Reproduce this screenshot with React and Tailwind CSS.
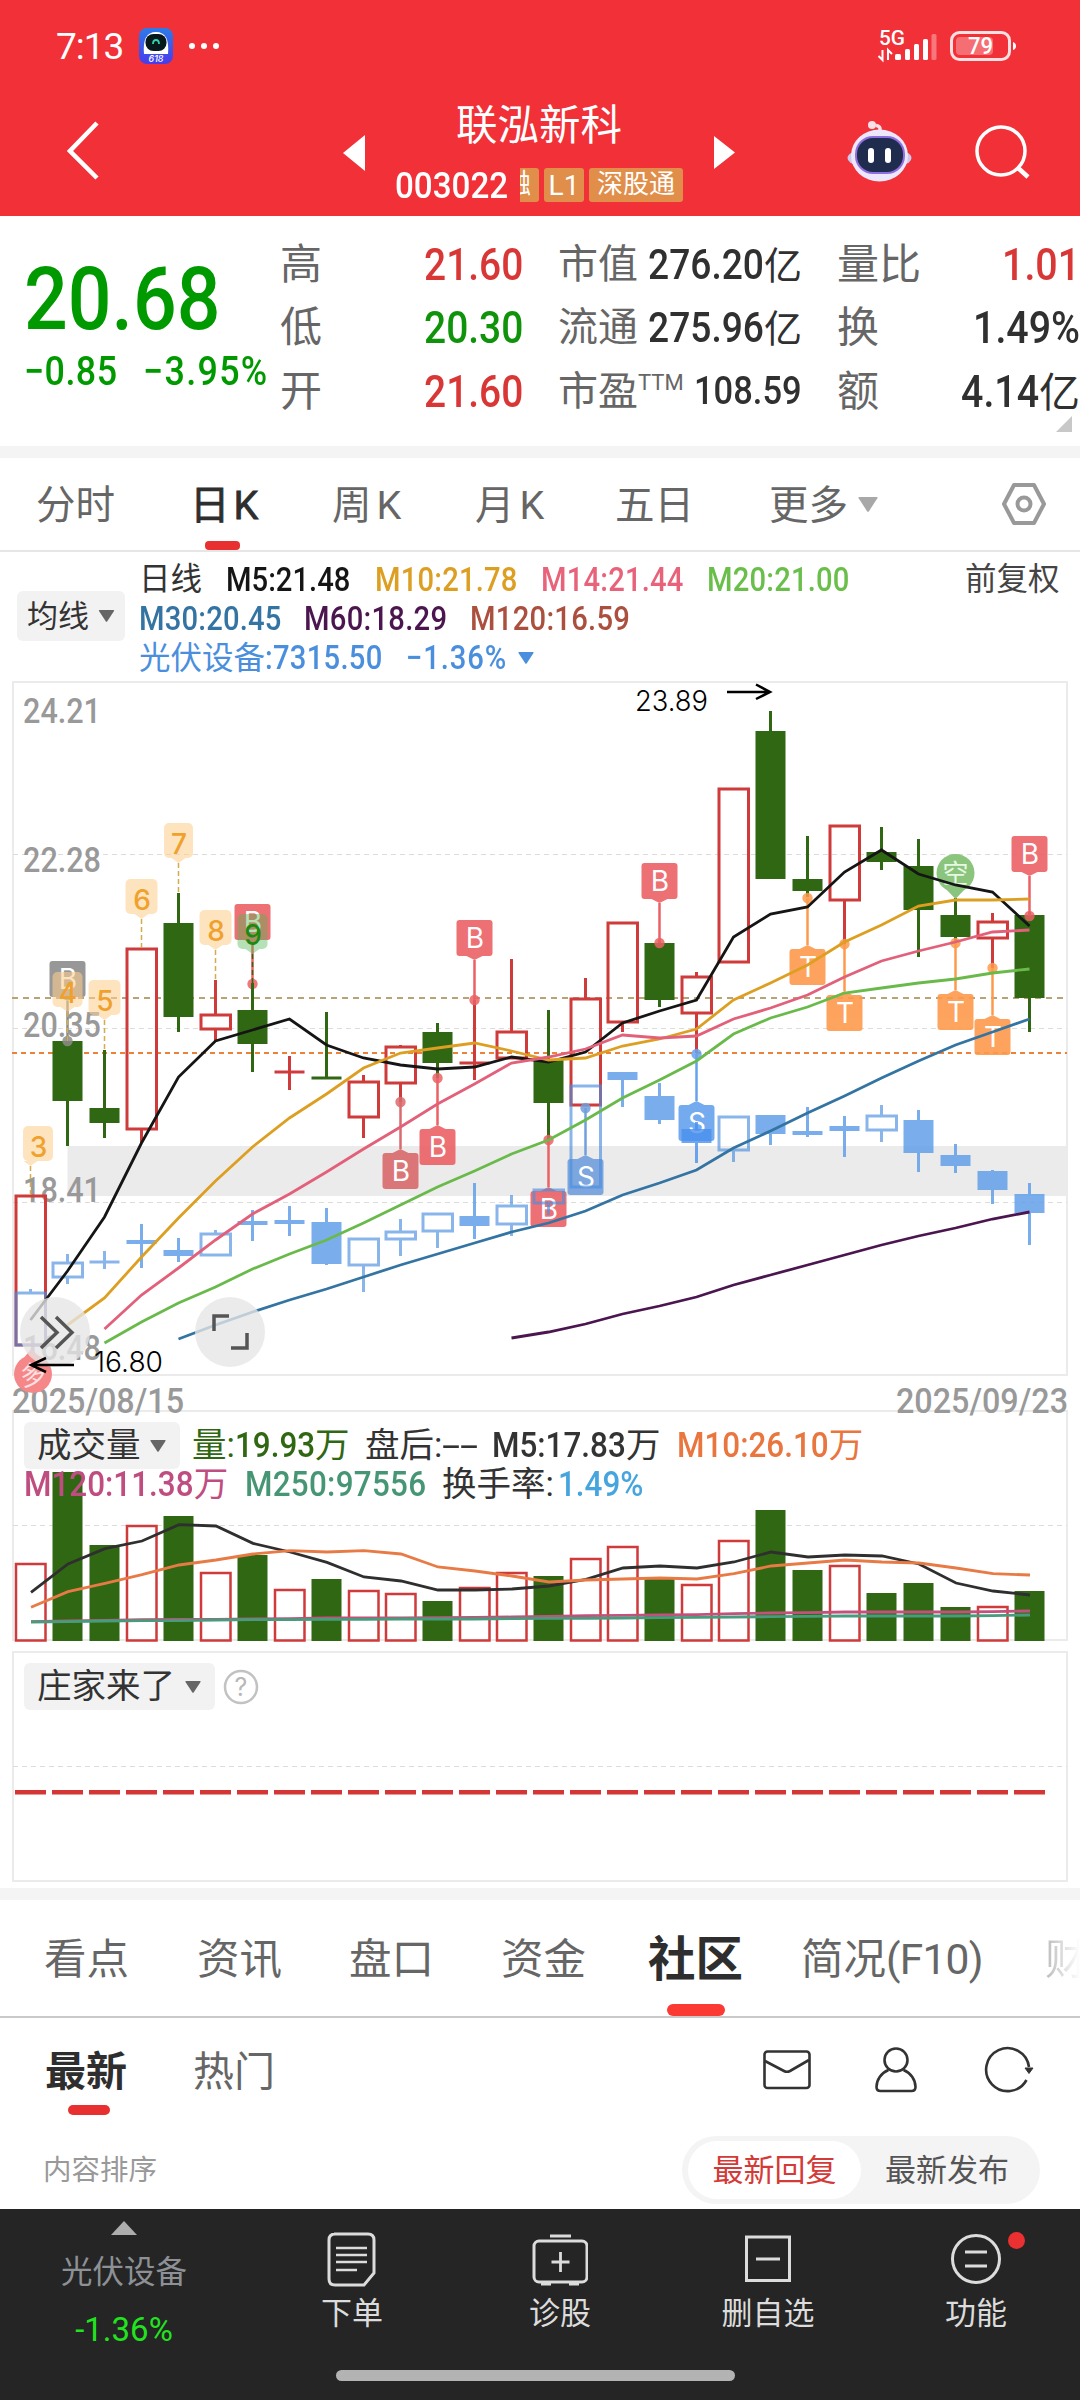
import React from 'react';

const STEP = 37;
const cx = (i) => 30.5 + STEP * i;

const RED = '#cf3a3a';
const GREEN = '#306712';

// [up, high, top, bottom, low]
const CANDLES = [
  [1, 1196, 1196, 1345, 1345], [0, 1041, 1041, 1101, 1146], [0, 1050, 1108, 1123, 1138],
  [1, 949, 949, 1129, 1143], [0, 893, 923, 1017, 1032], [1, 980, 1015, 1029, 1041],
  [0, 983, 1010, 1044, 1072], [1, 1056, 1072, 1072, 1090], [0, 1012, 1078, 1079, 1079],
  [1, 1075, 1082, 1117, 1138], [1, 1045, 1047, 1083, 1102], [0, 1023, 1032, 1063, 1078],
  [1, 1000, 1063, 1063, 1080], [1, 959, 1032, 1058, 1058], [0, 1010, 1060, 1103, 1140],
  [1, 978, 999, 1105, 1105], [1, 923, 923, 1022, 1032], [0, 940, 943, 1000, 1007],
  [1, 972, 977, 1013, 1053], [1, 789, 789, 962, 962], [0, 711, 731, 879, 879],
  [0, 836, 879, 891, 897], [1, 826, 826, 900, 944], [0, 827, 852, 862, 870],
  [0, 839, 866, 910, 957], [0, 898, 915, 937, 943], [1, 913, 922, 938, 968],
  [0, 912, 915, 998, 1032],
];

const SECTOR = [
  [1, 1289, 1293, 1345, 1345], [1, 1254, 1263, 1277, 1284], [1, 1251, 1262, 1262, 1269],
  [0, 1224, 1240, 1244, 1268], [0, 1238, 1250, 1256, 1262], [1, 1230, 1234, 1255, 1256],
  [0, 1210, 1221, 1225, 1241], [0, 1206, 1220, 1224, 1236], [0, 1208, 1222, 1264, 1265],
  [1, 1238, 1239, 1265, 1292], [1, 1219, 1232, 1239, 1256], [1, 1213, 1214, 1231, 1248],
  [0, 1183, 1216, 1226, 1239], [1, 1195, 1206, 1224, 1236], [1, 1190, 1190, 1203, 1215],
  [1, 1085, 1086, 1187, 1187], [0, 1072, 1072, 1080, 1107], [0, 1083, 1096, 1120, 1124],
  [0, 1122, 1129, 1143, 1163], [1, 1117, 1117, 1150, 1162], [0, 1115, 1115, 1134, 1145],
  [0, 1107, 1131, 1135, 1137], [0, 1116, 1126, 1131, 1157], [1, 1105, 1116, 1130, 1142],
  [0, 1110, 1120, 1153, 1172], [0, 1144, 1155, 1166, 1173], [0, 1170, 1171, 1190, 1204],
  [0, 1183, 1194, 1213, 1245],
];

const AVERAGES = [
  { color: '#151515', from: 0, ys: [1320, 1271, 1217, 1143, 1077, 1041, 1030, 1019, 1045, 1058, 1065, 1069, 1067, 1057, 1062, 1052, 1023, 1011, 1000, 937, 914, 907, 872, 850, 874, 885, 892, 926] },
  { color: '#dd9f22', from: 1, ys: [1325, 1298, 1257, 1218, 1181, 1147, 1118, 1094, 1068, 1053, 1048, 1043, 1051, 1060, 1058, 1046, 1039, 1029, 1000, 983, 965, 942, 925, 906, 900, 900, 899] },
  { color: '#e2607a', from: 2, ys: [1329, 1295, 1268, 1240, 1214, 1194, 1172, 1149, 1127, 1104, 1084, 1063, 1057, 1049, 1035, 1038, 1036, 1019, 1008, 995, 977, 961, 951, 942, 932, 930] },
  { color: '#6aba4b', from: 2, ys: [1343, 1322, 1303, 1287, 1269, 1254, 1240, 1223, 1205, 1187, 1171, 1154, 1140, 1120, 1098, 1080, 1061, 1034, 1018, 1007, 993, 988, 983, 979, 973, 969] },
  { color: '#3474a3', from: 4, ys: [1339, 1325, 1312, 1300, 1289, 1277, 1265, 1254, 1243, 1232, 1223, 1211, 1195, 1183, 1170, 1148, 1131, 1113, 1096, 1078, 1061, 1045, 1032, 1019] },
  { color: '#4b164f', from: 13, ys: [1338, 1332, 1324, 1314, 1306, 1297, 1285, 1275, 1265, 1255, 1245, 1236, 1228, 1219, 1212] },
];

// Signal flags: the dot marks the price, the flag hangs above or below it
const FLAGS = [
  { i: 1, dot: 1041, text: 'B', color: '#8c8c8c', up: true },
  { i: 6, dot: 984, text: 'B', color: '#eb6165', up: true },
  { i: 12, dot: 1000, text: 'B', color: '#eb6165', up: true },
  { i: 17, dot: 943, text: 'B', color: '#eb6165', up: true },
  { i: 27, dot: 916, text: 'B', color: '#eb6165', up: true },
  { i: 10, dot: 1102, text: 'B', color: '#da6a6c' },
  { i: 11, dot: 1078, text: 'B', color: '#eb6165' },
  { i: 14, dot: 1140, text: 'B', color: '#eb6165' },
  { i: 15, dot: 1108, text: 'S', color: '#719fdc' },
  { i: 18, dot: 1054, text: 'S', color: '#66a2ee' },
  { i: 21, dot: 898, text: 'T', color: '#fd9a4c' },
  { i: 22, dot: 944, text: 'T', color: '#fd9a4c' },
  { i: 25, dot: 943, text: 'T', color: '#fd9a4c' },
  { i: 26, dot: 968, text: 'T', color: '#fd9a4c' },
];

const COUNTS = [
  { x: 38, tip: 30.5, top: 1126, to: 1196, w: 30, text: '3' },
  { x: 67.5, tip: 67.5, top: 972, to: 1041, w: 30, text: '4' },
  { x: 104.5, tip: 104.5, top: 980, to: 1050, w: 32, text: '5' },
  { x: 141.5, tip: 141.5, top: 879, to: 949, w: 32, text: '6' },
  { x: 178.5, tip: 178.5, top: 823, to: 893, w: 29, text: '7' },
  { x: 215.5, tip: 215.5, top: 910, to: 980, w: 32, text: '8' },
  { x: 252.5, tip: 252.5, top: 914, to: 983, w: 30, text: '9', green: true },
];

const VOLUMES = [1564, 1472, 1545, 1526, 1516, 1573, 1555, 1590, 1579, 1591, 1594, 1601, 1588, 1573, 1576, 1559, 1547, 1578, 1585, 1541, 1510, 1570, 1566, 1593, 1583, 1607, 1607, 1591];

// Volume averages, in thirds of a pixel from the panel's top
const VOLUME_LINES = [
  { color: '#2f2f2f', ys: [547, 462, 416, 393, 344, 348, 400, 426, 457, 501, 513, 540, 540, 537, 528, 508, 474, 468, 474, 456, 426, 441, 435, 438, 462, 519, 543, 555] },
  { color: '#e87a45', ys: [592, 545, 520, 494, 465, 450, 432, 422, 426, 422, 432, 471, 483, 498, 516, 510, 507, 504, 507, 491, 468, 459, 450, 456, 459, 474, 491, 495] },
  { color: '#c2527c', ys: [635, 633, 631, 629, 628, 628, 627, 626, 624, 624, 624, 623, 622, 621, 619, 617, 616, 615, 614, 611, 609, 608, 606, 606, 606, 606, 605, 603] },
  { color: '#469c7c', ys: [636, 635, 633, 632, 632, 630, 629, 629, 628, 628, 627, 627, 627, 626, 625, 625, 624, 623, 622, 621, 620, 619, 618, 618, 618, 618, 617, 615] },
];

const CHAR_WIDTHS = { '.': 0.27, ':': 0.25, M: 0.875, '%': 0.73 };

// Narrow figures: squeezed glyphs, with the freed width given back to the line
function Num({ children, className = '' }) {
  const width = [...children].reduce((sum, ch) => sum + (CHAR_WIDTHS[ch] || 0.565), 0);
  return (
    <span
      className={`inline-block origin-left scale-x-[0.885] font-medium ${className}`}
      style={{ marginRight: `${(-width * 0.115).toFixed(3)}em` }}
    >
      {children}
    </span>
  );
}

function Candle({ i, data, up, down, opacity = 1 }) {
  const [isUp, high, top, bottom, low] = data;
  const color = isUp ? up : down;
  const x = cx(i);
  const flat = bottom - top < 3;
  return (
    <g stroke={color} strokeWidth="3" opacity={opacity}>
      {high < top && <line x1={x} x2={x} y1={high} y2={top} />}
      {low > bottom && <line x1={x} x2={x} y1={bottom} y2={low} />}
      {flat && <line x1={x - 15} x2={x + 15} y1={top} y2={top} />}
      {!flat && isUp === 1 && <rect x={x - 14.5} y={top} width="29.5" height={bottom - top} fill="none" />}
      {!flat && isUp === 0 && <rect x={x - 15} y={top} width="30" height={bottom - top} fill={color} stroke="none" />}
    </g>
  );
}

function Flag({ i, dot, text, color, up }) {
  const x = cx(i);
  const top = up ? dot - 80 : dot + 51;
  const tip = up ? top + 40 : top - 4;
  const base = up ? top + 36 : top;
  return (
    <g>
      <line x1={x} x2={x} y1={tip} y2={dot} stroke={color} strokeWidth="2.5" />
      <circle cx={x} cy={dot} r="5.2" fill={color} opacity="0.85" />
      <g fill={color} opacity="0.9">
        <rect x={x - 18} y={top} width="36" height="36" rx="3" />
        <path d={`M${x - 8} ${base}L${x} ${tip}L${x + 8} ${base}Z`} />
      </g>
      <text x={x + 0.5} y={top + 28} textAnchor="middle" fill="#fff" fontSize="28" fontFamily="Inter">{text}</text>
    </g>
  );
}

function Count({ x, tip, top, to, w, text, green }) {
  const fill = green ? '#54b954' : '#fdcf90';
  return (
    <g>
      <line x1={tip} x2={tip} y1={top + 40} y2={to} stroke={green ? '#306712' : '#d3ac4c'} strokeWidth="1.5" strokeDasharray="5 3" />
      <g fill={fill} opacity={green ? 0.42 : 0.58}>
        <rect x={x - w / 2} y={top} width={w} height="35" rx="5" />
        <path d={`M${tip - 7} ${top + 35}L${tip} ${top + 40}L${tip + 7} ${top + 35}Z`} />
      </g>
      <text x={x + 0.5} y={top + 31} textAnchor="middle" fill={green ? '#1c8a10' : '#efa12c'} fontSize="28" fontWeight="500" fontFamily="Inter">{text}</text>
    </g>
  );
}

function Caret({ className }) {
  return (
    <svg viewBox="0 0 16 12" className={className} fill="currentColor">
      <path d="M1 0h14q1 0 .5 1L8.800 11.300q-.8 1-1.600 0L.5 1Q0 0 1 0z" />
    </svg>
  );
}

function StatusBar() {
  return (
    <div className="h-[92px] pl-[56px] pr-[64px] flex items-center text-white">
      <span className="text-[37px] leading-none w-[83px] tracking-[-1px]">7:13</span>
      <svg width="34" height="36" viewBox="0 0 34 36">
        <defs>
          <linearGradient id="app" x1="0" y1="0" x2="0" y2="1">
            <stop offset="0" stopColor="#2c7bea" />
            <stop offset="1" stopColor="#4a3bea" />
          </linearGradient>
        </defs>
        <rect width="34" height="36" rx="8" fill="url(#app)" />
        <path d="M5 26Q3 4 17 4t12 22z" fill="#fff" />
        <rect x="6.500" y="6" width="21" height="17" rx="8" fill="#07191b" />
        <path d="M14 16q0-4 3-4t3 4" stroke="#2fd3ae" strokeWidth="1.800" fill="none" />
        <text x="17" y="34" fontSize="9" fontStyle="italic" fontWeight="500" fill="#fff" textAnchor="middle" fontFamily="Inter">618</text>
      </svg>
      <svg width="32" height="8" viewBox="0 0 32 8" className="ml-[15px]" fill="#fff">
        <circle cx="4" cy="4" r="3" /><circle cx="16" cy="4" r="3" /><circle cx="28" cy="4" r="3" />
      </svg>
      <svg width="60" height="36" viewBox="0 0 60 36" className="ml-auto overflow-visible" fill="#fff">
        <text x="1" y="17" fontSize="21" fontWeight="500" textLength="26" lengthAdjust="spacingAndGlyphs">5G</text>
        <path d="M4.500 22v10l-4-4M10 32V22l4 4" stroke="#fff" strokeWidth="2" fill="none" />
        <rect x="17" y="26" width="6" height="6" rx="1.500" />
        <rect x="27" y="21" width="5" height="11" rx="1.500" />
        <rect x="36" y="16" width="5" height="16" rx="1.500" />
        <rect x="45" y="11" width="5" height="21" rx="1.500" />
        <rect x="53.500" y="6" width="5" height="26" rx="1.500" opacity="0.35" />
      </svg>
      <svg width="66" height="32" viewBox="0 0 66 32" className="ml-[12px]">
        <rect x="1.500" y="2.500" width="58" height="27" rx="8" fill="none" stroke="#fff" strokeOpacity="0.850" strokeWidth="3" />
        <rect x="6" y="7" width="37" height="18" rx="4" fill="#fff" opacity="0.3" />
        <path d="M63 12v8q3-1 3-4t-3-4z" fill="#fff" />
        <text x="30.500" y="24" textAnchor="middle" fill="#fff" fontSize="23" fontWeight="500" textLength="25" lengthAdjust="spacingAndGlyphs">79</text>
      </svg>
    </div>
  );
}

function Header() {
  return (
    <div className="h-[124px] grid grid-cols-[67px_276px_52px_319px_133px_128px_105px] text-white">
      <span />
      <svg width="34" height="60" viewBox="0 0 34 60" className="mt-[28px]" fill="none" stroke="#fff" strokeWidth="4.500">
        <path d="M30 3L3 31L30 58" />
      </svg>
      <svg width="23" height="36" viewBox="0 0 23 36" className="mt-[43px]" fill="#fff"><path d="M22 0v36L0 18z" /></svg>
      <div className="flex flex-col pt-[9px]">
        <div className="text-[41.500px] leading-[50px] pl-[61px] whitespace-nowrap">联泓新科</div>
        <div className="flex items-center h-[34px] mt-[17px]">
          <span className="text-[37.500px] w-[125px] leading-none pt-[2px]"><Num>003022</Num></span>
          <span className="w-[19px] h-[34px] rounded-r-[3px] bg-[#e08e4a] overflow-hidden flex justify-end text-[27px] leading-[33px] pr-[8px] whitespace-nowrap">融</span>
          <span className="w-[40px] h-[34px] ml-[5px] rounded-[3px] bg-[#e08e4a] text-[28px] leading-[35px] text-center">L1</span>
          <span className="w-[94px] h-[34px] ml-[5px] rounded-[3px] bg-[#e08e4a] text-[26px] leading-[33px] text-center whitespace-nowrap shrink-0">深股通</span>
        </div>
      </div>
      <svg width="22" height="34" viewBox="0 0 22 34" className="mt-[44px]" fill="#fff"><path d="M0 0v33L21 16.500z" /></svg>
      <svg width="66" height="62" viewBox="0 0 66 62" className="mt-[28px]">
        <path d="M33 11Q34 6 29 5.500" stroke="#f8dfe8" strokeWidth="3.500" fill="none" />
        <circle cx="25" cy="5" r="4" fill="#f8dfe8" />
        <ellipse cx="32.500" cy="38" rx="32" ry="11" fill="#cfc8ee" />
        <ellipse cx="32.500" cy="35.500" rx="28.500" ry="26" fill="#ece7fb" />
        <rect x="8" y="16" width="50" height="38" rx="18" fill="#8f6fe0" />
        <rect x="10" y="18" width="46" height="34" rx="16" fill="#202c4e" />
        <rect x="21" y="28" width="6" height="15" rx="3" fill="#fff" />
        <rect x="38" y="28" width="6" height="15" rx="3" fill="#fff" />
      </svg>
      <svg width="56" height="56" viewBox="0 0 56 56" className="mt-[33px]" fill="none" stroke="#fff" strokeWidth="3.500">
        <circle cx="26" cy="26" r="24" />
        <path d="M42 42L53 52" strokeWidth="4.500" />
      </svg>
    </div>
  );
}

const QUOTES = [
  ['高', '21.60', '#d93636', '市值', '276.20', '亿', '量比', '1.01', ''],
  ['低', '20.30', '#0f930a', '流通', '275.96', '亿', '换', '1.49%', ''],
  ['开', '21.60', '#d93636', '市盈', '108.59', '', '额', '4.14', '亿'],
];

function Quote() {
  return (
    <div className="h-[230px] flex bg-white relative">
      <div className="w-[280px] pl-[24px] pt-[41px] text-[#009a00] shrink-0">
        <div className="text-[87px] leading-[84px]"><Num>20.68</Num></div>
        <div className="flex text-[40.500px] leading-[40px] mt-[10px] whitespace-nowrap">
          <span className="w-[119px]"><Num className="tracking-[0.500px]">−0.85</Num></span>
          <Num className="tracking-[1.500px]">−3.95%</Num>
        </div>
      </div>
      <div className="flex-1 pt-[17px]">
        {QUOTES.map(([a, av, color, b, bv, bu, c, cv, cu], i) => (
          <div key={a} className="h-[63.500px] grid grid-cols-[243px_35px_244px_35px_243px] items-center text-[42px] leading-none text-[#666] whitespace-nowrap">
            <div className="flex justify-between items-center">
              <span>{a}</span>
              <span className="text-[44px]" style={{ color }}><Num>{av}</Num></span>
            </div>
            <span />
            <div className="flex justify-between items-center">
              <span className="text-[40px]">{b}{i === 2 && <sup className="text-[22px] top-[-15px]">TTM</sup>}</span>
              <span className="text-[#303030] text-[38px]"><Num className={i === 2 ? 'text-[39px]' : 'text-[42px]'}>{bv}</Num>{bu}</span>
            </div>
            <span />
            <div className="flex justify-between items-center">
              <span>{c}</span>
              <span className="text-[41px]" style={{ color: i === 0 ? '#d93636' : '#303030' }}><Num className="text-[44.500px]">{cv}</Num>{cu}</span>
            </div>
          </div>
        ))}
      </div>
      <svg width="16" height="16" viewBox="0 0 16 16" className="absolute right-[8px] bottom-[14px]" fill="#c8c8c8"><path d="M16 0v16H0z" /></svg>
    </div>
  );
}

function PeriodTabs() {
  return (
    <div className="h-[94px] border-b-2 border-[#e6e6e6] grid grid-cols-[36px_154px_142px_143px_140px_154px_89px_144px_78px] items-center text-[39.500px] leading-[48px] text-[#666] whitespace-nowrap">
      <span />
      <span className="pt-[3px]">分时</span>
      <div className="relative h-full flex items-center pt-[3px] text-[#2e2e2e]">
        <span className="[-webkit-text-stroke:0.8px_#2e2e2e]">日<span className="ml-[4px]">K</span></span>
        <i className="absolute left-[15px] bottom-0 w-[35px] h-[9px] rounded-[4px] bg-[#e83030]" />
      </div>
      <span className="pt-[3px]">周<span className="ml-[5px]">K</span></span>
      <span className="pt-[3px]">月<span className="ml-[5px]">K</span></span>
      <span className="pt-[3px]">五日</span>
      <span className="pt-[3px]">更多</span>
      <Caret className="w-[20px] h-[17px] text-[#a8a8a8]" />
      <svg width="44" height="44" viewBox="0 0 44 44" fill="none" stroke="#999" strokeWidth="4">
        <path d="M12 3h20l10 19l-10 19H12L2 22z" strokeLinejoin="round" />
        <circle cx="22" cy="22" r="6.500" />
      </svg>
    </div>
  );
}

function AverageLegend() {
  return (
    <div className="h-[129px] flex pt-[8px] text-[33px] leading-[39px] whitespace-nowrap">
      <div className="w-[108px] h-[50px] ml-[17px] mt-[31px] rounded-[6px] bg-[#f2f2f2] flex items-center pl-[10px] text-[31px] text-[#333]">
        <span className="w-[71px]">均线</span>
        <Caret className="w-[17px] h-[12px] text-[#666]" />
      </div>
      <div className="ml-[14px] flex-1">
        <div className="grid grid-cols-[87px_149px_166px_166px_258px_100px] h-[39px]">
          <span className="text-[31.500px] text-[#333]">日线</span>
          <Num className="text-[#151515]">M5:21.48</Num>
          <Num className="text-[#dd9f22] tracking-[0.200px]">M10:21.78</Num>
          <Num className="text-[#e8637a] tracking-[0.200px]">M14:21.44</Num>
          <Num className="text-[#6abf4b] tracking-[0.200px]">M20:21.00</Num>
          <span className="text-[31.500px] text-[#444]">前复权</span>
        </div>
        <div className="grid grid-cols-[165px_166px_170px] h-[39px]">
          <Num className="text-[#3474a3] tracking-[0.200px]">M30:20.45</Num>
          <Num className="text-[#4b164f] tracking-[0.300px]">M60:18.29</Num>
          <Num className="text-[#ab4f3e] tracking-[0.300px]">M120:16.59</Num>
        </div>
        <div className="flex items-center h-[39px] text-[#4a8fdd]">
          <span className="w-[267px]"><span className="text-[31.500px]">光伏设备</span><Num className="tracking-[0.300px]">:7315.50</Num></span>
          <span className="w-[112px]"><Num className="tracking-[1px]">−1.36%</Num></span>
          <Caret className="w-[16px] h-[12px]" />
        </div>
      </div>
    </div>
  );
}

const AXIS = [['24.21', 723], ['22.28', 872], ['20.35', 1037], ['18.41', 1202], ['16.48', 1360]];

function isHollow(candle) {
  return candle[0] === 1;
}

function PriceChart() {
  return (
    <svg width="1080" height="731" viewBox="0 680 1080 731" className="block overflow-visible">
      <rect x="67.500" y="1146" width="1000.500" height="50" fill="#ebebeb" />
      <rect x="13" y="682" width="1054" height="693" fill="none" stroke="#ebebeb" strokeWidth="2" />
      <g stroke="#dcdcdc" strokeWidth="1.200" strokeDasharray="5 4">
        <line x1="13" x2="1067" y1="854.500" y2="854.500" />
        <line x1="13" x2="1067" y1="1028.500" y2="1028.500" />
        <line x1="13" x2="1067" y1="1202.500" y2="1202.500" />
      </g>
      <line x1="12" x2="1067" y1="998" y2="998" stroke="#b9a374" strokeWidth="2" strokeDasharray="6 5" />
      <line x1="12" x2="1067" y1="1053" y2="1053" stroke="#ee8138" strokeWidth="2" strokeDasharray="5 4" />
      <g fill="#999" fontSize="35" fontWeight="500">
        {AXIS.map(([label, y]) => <text key={label} x="23" y={y} textLength="78" lengthAdjust="spacingAndGlyphs">{label}</text>)}
        <text x="12" y="1413" textLength="172" lengthAdjust="spacingAndGlyphs">2025/08/15</text>
        <text x="896" y="1413" textLength="172" lengthAdjust="spacingAndGlyphs">2025/09/23</text>
      </g>
      <Flag {...FLAGS[1]} />
      {CANDLES.map((c, i) => <Candle key={i} i={i} data={c} up={RED} down={GREEN} />)}
      {FLAGS.filter((f) => f.i !== 6).map((f) => <Flag key={f.i} {...f} />)}
      {COUNTS.map((c) => <Count key={c.text} {...c} />)}
      {SECTOR.map((c, i) => <Candle key={i} i={i} data={c} up="#4b8fe0" down={i === 18 ? '#4a90ee' : '#639fe9'} opacity={i === 18 ? 0.8 : isHollow(c) ? 0.65 : 0.85} />)}
      <g fill="#8bc47c">
        <circle cx="955.500" cy="873" r="19" />
        <path d="M945 888L955.500 899L966 888z" />
        <text x="955.500" y="883" textAnchor="middle" fill="#e6f8e2" fontSize="26" fontFamily="Noto Sans CJK SC">空</text>
      </g>
      {AVERAGES.map(({ color, from, ys }) => (
        <polyline key={color} points={ys.map((y, i) => `${cx(from + i)},${y}`).join(' ')} fill="none" stroke={color} strokeWidth="2.800" />
      ))}
      <g fill="#f58788">
        <circle cx="33" cy="1374" r="19" />
        <path d="M23 1359L31 1349L42 1359z" />
        <text x="33" y="1384" textAnchor="middle" fill="#fde0e0" fontSize="26" fontFamily="Noto Sans CJK SC" transform="rotate(-12 33 1374)">多</text>
      </g>
      <g fill="#000" fontSize="29" fontFamily="Inter" fontWeight="300">
        <text x="635" y="711" textLength="73" lengthAdjust="spacingAndGlyphs">23.89</text>
        <text x="94" y="1372" textLength="69" lengthAdjust="spacingAndGlyphs">16.80</text>
      </g>
      <g fill="#e6e6e6" opacity="0.780">
        <circle cx="55" cy="1332" r="35" />
        <circle cx="230" cy="1332" r="35" />
      </g>
      <g fill="none" stroke="#555" strokeWidth="3.500">
        <path d="M41 1317L57 1332.500L41 1348M56 1317L72 1332.500L56 1348" />
        <path d="M229 1316h-15v15M231 1348h16v-15" />
      </g>
      <g fill="none" stroke="#000" strokeWidth="2.500">
        <path d="M727 692h43M756 684.500L770 692L756 699" />
        <path d="M74 1365H32M46 1358L31 1365L46 1372" />
      </g>
    </svg>
  );
}

function Picker({ label, className }) {
  return (
    <div className={`h-[47px] rounded-[6px] bg-[#f2f2f2] flex items-center pl-[13px] pr-[14px] justify-between text-[34.500px] text-[#333] whitespace-nowrap shrink-0 ${className}`}>
      <span>{label}</span>
      <Caret className="w-[16px] h-[12px] text-[#666]" />
    </div>
  );
}

function VolumeChart() {
  return (
    <div className="relative h-[240px]">
      <svg width="1080" height="240" viewBox="0 1410 1080 240" className="block">
        <path d="M13 1640V1411H1067V1640z" fill="none" stroke="#ebebeb" strokeWidth="2" />
        <line x1="13" x2="1067" y1="1525.500" y2="1525.500" stroke="#dcdcdc" strokeWidth="1.200" strokeDasharray="5 4" />
        {VOLUMES.map((y, i) => CANDLES[i][0] ? (
          <rect key={i} x={cx(i) - 14.5} y={y} width="29.500" height={1640.5 - y} fill="none" stroke={RED} strokeWidth="2.500" />
        ) : (
          <rect key={i} x={cx(i) - 15} y={y} width="30" height={1641 - y} fill={GREEN} />
        ))}
        {VOLUME_LINES.map(({ color, ys }) => (
          <polyline key={color} points={ys.map((v, i) => `${cx(i) + 0.5},${1410 + v / 3}`).join(' ')} fill="none" stroke={color} strokeWidth="2.800" />
        ))}
      </svg>
      {/* The figures run over the tallest bars */}
      <div className="absolute inset-0 pl-[24px] pt-[12px] text-[34.500px] leading-[39px] whitespace-nowrap">
        <div className="flex items-center h-[47px]">
          <Picker label="成交量" className="w-[156px]" />
          <span className="w-[172px] pl-[12px] text-[#306712]">量:<Num className="text-[35.500px]">19.93</Num>万</span>
          <span className="w-[140px] pl-[13px] text-[#333]">盘后:<span className="inline-block origin-left scale-x-[1.9]">--</span></span>
          <span className="w-[185px] text-[#333]"><Num className="text-[35.500px]">M5:17.83</Num>万</span>
          <span className="text-[#e8763e]"><Num className="text-[35.500px]">M10:26.10</Num>万</span>
        </div>
        <div className="flex items-center h-[30px]">
          <span className="w-[221px] text-[#bf4d80]"><Num className="text-[35.500px]">M120:11.38</Num>万</span>
          <span className="w-[197px] text-[#469676]"><Num className="text-[35.500px] tracking-[0.300px]">M250:97556</Num></span>
          <span className="w-[116px] text-[#333]">换手率:</span>
          <Num className="text-[35.500px] text-[#46a5de]">1.49%</Num>
        </div>
      </div>
    </div>
  );
}

function DealerPanel() {
  return (
    <div className="relative h-[238px]">
      <svg width="1080" height="238" viewBox="0 1650 1080 238" className="block">
        <rect x="13" y="1652" width="1054" height="229" fill="none" stroke="#ebebeb" strokeWidth="2" />
        <line x1="13" x2="1067" y1="1766.500" y2="1766.500" stroke="#dcdcdc" strokeWidth="1.200" strokeDasharray="5 4" />
        {VOLUMES.map((_, i) => (
          <rect key={i} x={cx(i) - 15.5} y="1790" width="31" height="4.500" fill="#d43636" />
        ))}
      </svg>
      <div className="absolute left-[24px] top-[13px] flex items-center">
        <Picker label="庄家来了" className="w-[191px]" />
        <svg width="36" height="36" viewBox="0 0 36 36" className="ml-[8px]">
          <circle cx="18" cy="18" r="16" fill="none" stroke="#c2c2c2" strokeWidth="2.500" />
          <text x="18" y="27" textAnchor="middle" fill="#b8b8b8" fontSize="25" fontFamily="Inter">?</text>
        </svg>
      </div>
    </div>
  );
}

function SectionTabs() {
  return (
    <div className="h-[118px] border-b-2 border-[#c9c9c9] grid grid-cols-[44px_153px_152px_152px_147px_153px_244px_35px] items-center text-[42.500px] leading-[50px] text-[#666] whitespace-nowrap overflow-hidden">
      <span />
      <span className="pt-[3px]">看点</span>
      <span className="pt-[3px]">资讯</span>
      <span className="pt-[3px]">盘口</span>
      <span className="pt-[3px]">资金</span>
      <div className="relative h-full flex items-center text-[47.500px] font-bold text-[#2e2e2e] pt-[3px]">
        <span>社区</span>
        <i className="absolute left-[19px] bottom-0 w-[58px] h-[12px] rounded-[6px] bg-[#fb3b33]" />
      </div>
      <span className="pt-[3px]">简况<span className="tracking-[-0.8px]">(F10)</span></span>
      <span className="overflow-hidden bg-linear-to-r from-[#bbb] to-[#fff] bg-clip-text text-transparent pt-[3px]">财</span>
    </div>
  );
}

function Community() {
  return (
    <div className="h-[191px] bg-white">
      <div className="h-[104px] flex items-center pl-[45px] text-[41px] leading-[50px] whitespace-nowrap">
        <div className="relative h-full w-[148px] flex items-center font-bold text-[#2e2e2e] pt-[3px]">
          <span>最新</span>
          <i className="absolute left-[23px] bottom-[7px] w-[42px] h-[10px] rounded-[5px] bg-[#e83030]" />
        </div>
        <span className="text-[#666] pt-[3px]">热门</span>
        <div className="ml-auto flex items-center pr-[46px] h-full">
          <svg width="48" height="40" viewBox="0 0 48 40" fill="none" stroke="#333" strokeWidth="2.600">
            <rect x="1.500" y="1.500" width="45" height="36.500" rx="3" />
            <path d="M2 11L21 21q3 1.500 6 0L46 10" />
          </svg>
          <svg width="42" height="46" viewBox="0 0 42 46" className="ml-[64px]" fill="none" stroke="#333" strokeWidth="2.600">
            <circle cx="21" cy="13" r="11.500" />
            <path d="M13.500 23C6 26 1.500 33 1.500 40q0 4 4 4h31q4 0 4-4C40.500 33 36 26 28.500 23" />
          </svg>
          <svg width="50" height="46" viewBox="0 0 50 46" className="ml-[67px] overflow-visible" fill="none" stroke="#333" strokeWidth="2.600">
            <path d="M42.500 33A21.500 21.500 0 1 1 45 20" />
            <path d="M41 21h8l-4 5.500z" fill="#333" strokeWidth="1" />
          </svg>
        </div>
      </div>
      <div className="h-[87px] flex items-start justify-between pl-[43px] pr-[40px] whitespace-nowrap">
        <span className="text-[28.500px] text-[#999] leading-[66px] pt-[16px]">内容排序</span>
        <div className="mt-[14px] w-[358px] h-[68px] rounded-full bg-[#f4f4f4] flex items-center pl-[6px] text-[31px] leading-[38px]">
          <span className="w-[173px] h-[58px] pt-[2px] rounded-full bg-white text-[#d33a38] flex items-center justify-center">最新回复</span>
          <span className="pl-[24px] pt-[2px] text-[#555]">最新发布</span>
        </div>
      </div>
    </div>
  );
}

const ACTIONS = [
  {
    label: '下单',
    icon: <><path d="M6 3h34q6 0 6 6v33L36 54H7q-6 0-6-6V9q0-6 6-6z" /><path d="M8 17h31M8 24h31M8 31h31M8 39h21" strokeWidth="2.500" /></>,
  },
  {
    label: '诊股',
    icon: <><path d="M14 5h21" strokeWidth="3" /><rect x="-2" y="10" width="53" height="41" rx="5" /><path d="M24.500 21v20M15.500 31h18M5 53h10M33 53h10" strokeWidth="2.800" /></>,
  },
  {
    label: '删自选',
    icon: <><rect x="2.500" y="6" width="43" height="43.500" /><path d="M12 28h24" /></>,
  },
  {
    label: '功能',
    icon: <><circle cx="24" cy="28" r="23.500" /><path d="M13 21h22M13 35h22" /></>,
    dot: true,
  },
];

function BottomBar() {
  return (
    <div className="h-[191px] bg-[#252525] flex flex-col items-center">
      <div className="h-[161px] w-full grid grid-cols-[248px_208px_208px_208px_208px] text-[31px] leading-none">
        <div className="flex flex-col items-center text-[#8d9195] pt-[12px]">
          <svg width="26" height="14" viewBox="0 0 26 14" fill="#adadad"><path d="M13 0L26 14H0z" /></svg>
          <span className="mt-[22px] text-[31.500px]">光伏设备</span>
          <span className="mt-[24px] text-[#22e41e] text-[33px]">-1.36%</span>
        </div>
        {ACTIONS.map(({ label, icon, dot }) => (
          <div key={label} className="relative flex flex-col items-center pt-[22px] text-[#dcdcdc]">
            <svg width="56" height="58" viewBox="-4 0 56 58" fill="none" stroke="#dcdcdc" strokeWidth="3">{icon}</svg>
            <span className="mt-[9px]">{label}</span>
            {dot && <i className="absolute left-[136px] top-[23px] w-[17px] h-[17px] rounded-full bg-[#ea3030]" />}
          </div>
        ))}
      </div>
      <div className="w-[399px] h-[11px] rounded-full bg-[#b3b3b3] mr-[9px]" />
    </div>
  );
}

export default function App() {
  return (
    <div className="w-[1080px] h-[2400px] overflow-hidden bg-white font-['Roboto','Noto_Sans_CJK_SC',sans-serif]">
      <div className="bg-[#f13037]">
        <StatusBar />
        <Header />
      </div>
      <Quote />
      <div className="h-[12px] bg-[#f4f4f4]" />
      <PeriodTabs />
      <AverageLegend />
      <div className="-mt-[1px] relative z-10">
        <PriceChart />
      </div>
      <div className="-mt-[1px]">
        <VolumeChart />
      </div>
      <DealerPanel />
      <div className="h-[12px] bg-[#f4f4f4]" />
      <SectionTabs />
      <Community />
      <BottomBar />
    </div>
  );
}
